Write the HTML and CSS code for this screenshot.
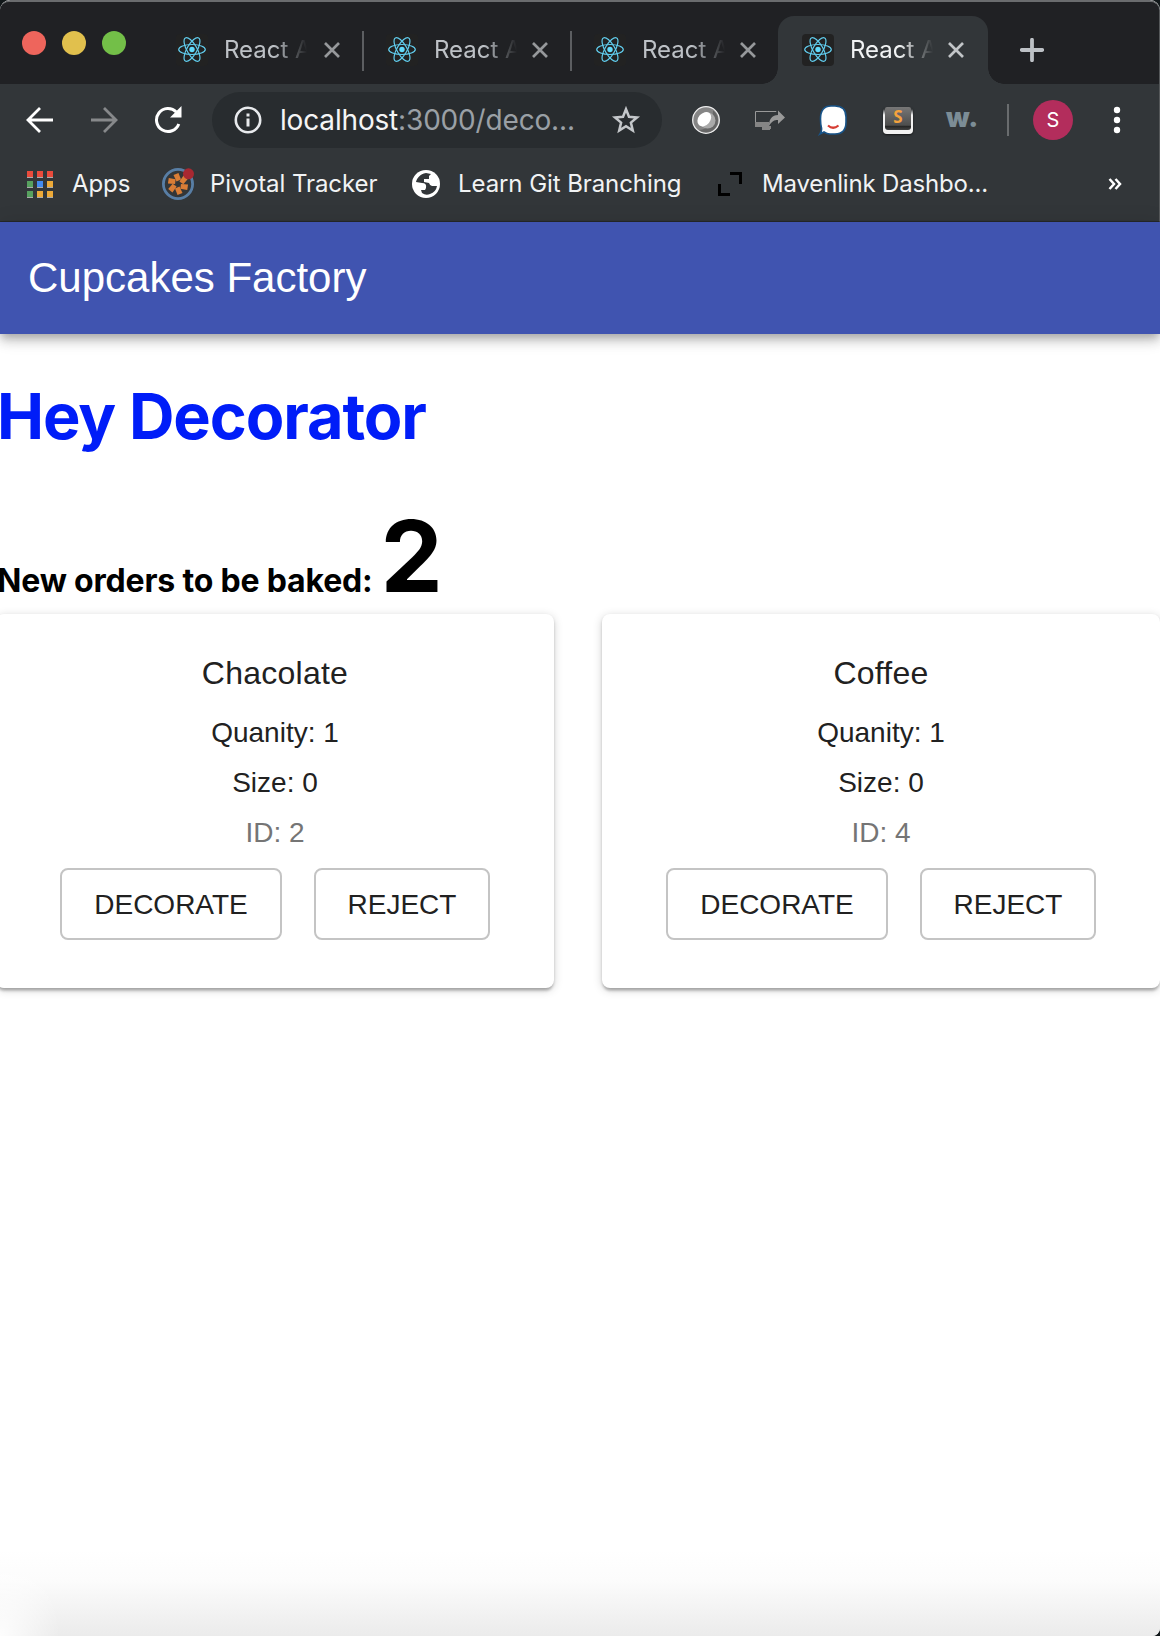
FILE: index.html
```html
<!DOCTYPE html>
<html lang="en">
<head>
<meta charset="utf-8">
<title>Cupcakes Factory</title>
<link rel="stylesheet" href="styles.css">
</head>
<body>
<svg class="defs" width="0" height="0">
  <symbol id="react" viewBox="0 0 32 32">
    <g fill="none" stroke="#61cdee" stroke-width="1.2">
      <ellipse cx="16" cy="15.5" rx="13.3" ry="5"/>
      <ellipse cx="16" cy="15.5" rx="13.3" ry="5" transform="rotate(60 16 15.5)"/>
      <ellipse cx="16" cy="15.5" rx="13.3" ry="5" transform="rotate(120 16 15.5)"/>
    </g>
    <circle cx="16" cy="15.5" r="2.7" fill="#61dafb"/>
  </symbol>
  <symbol id="close" viewBox="0 0 18 18">
    <path d="M2 2 16 16M16 2 2 16" fill="none" stroke="currentColor" stroke-width="2.7"/>
  </symbol>
</svg>
<div class="window">
  <header class="chrome">
    <div class="tabstrip">
      <div class="lights"><i class="red"></i><i class="yellow"></i><i class="green"></i></div>
      <div class="tabs">
        <div class="tab first"><svg class="fav"><use href="#react"/></svg><span class="title">React A</span><svg class="close"><use href="#close"/></svg></div>
        <div class="tab"><svg class="fav"><use href="#react"/></svg><span class="title">React A</span><svg class="close"><use href="#close"/></svg></div>
        <div class="tab last"><svg class="fav"><use href="#react"/></svg><span class="title">React A</span><svg class="close"><use href="#close"/></svg></div>
        <div class="tab active"><svg class="fav"><use href="#react"/></svg><span class="title">React A</span><svg class="close"><use href="#close"/></svg></div>
        <svg class="plus" width="24" height="24"><path d="M12 1.8V22.2M1.8 12H22.2" stroke="#bdc1c6" stroke-width="3.8" stroke-linecap="round"/></svg>
      </div>
    </div>
    <div class="toolbar">
      <svg class="back" width="28" height="28" fill="none" stroke="#fff" stroke-width="2.8"><path d="M27 14H3M14 2 2 14 14 26"/></svg>
      <svg class="forward" width="28" height="28" fill="none" stroke="#87898b" stroke-width="2.8"><path d="M1 14H25M14 2 26 14 14 26"/></svg>
      <svg class="reload" width="28" height="28"><path d="M24.8 18A11.5 11.5 0 1 1 22.3 6" fill="none" stroke="#fff" stroke-width="3"/><path d="M27.5 0V11.5H16Z" fill="#fff"/></svg>
      <div class="omnibox">
        <svg width="28" height="28"><circle cx="14" cy="14" r="12.2" fill="none" stroke="#e8eaed" stroke-width="2.6"/><path d="M12.5 7.5h3v3h-3zM12.5 12.5h3v8h-3z" fill="#e8eaed"/></svg>
        <span class="url"><b>localhost</b>:3000/deco...</span>
        <svg class="star" width="30" height="30" fill="none" stroke="#c4c7ca" stroke-width="2.5"><path d="M15 4.2 18 11.7 26 12.4 19.9 17.6 21.8 25.5 15 21.3 8.2 25.5 10.1 17.6 4 12.4 12 11.7Z"/></svg>
      </div>
      <svg class="ext-ball" width="30" height="30"><circle cx="15" cy="15" r="13.3" fill="#858585" stroke="#eee" stroke-width="1.3"/><path d="M22 5.5A12 12 0 0 1 8 25Q22 24 22 5.5Z" fill="#666"/><circle cx="16.5" cy="15.5" r="8" fill="#aaa"/><ellipse cx="13.3" cy="14.2" rx="6" ry="8" transform="rotate(40 13.3 14.2)" fill="#fff"/></svg>
      <svg class="ext-screen" width="32" height="30"><path d="M22 7V6.5H1.5V18" fill="none" stroke="#999"/><path d="M1 17h14v5H1zM8 22h8v3H8zM14 21h3v3h-3z" fill="#858585"/><path d="M15 21C15 14 18 10 24 10V5.500L31 12.5 24 19V15C20 15 18 16 15 21Z" fill="#999"/></svg>
      <svg class="ext-chat" width="32" height="32"><path d="M3 30Q5 27 4.500 24Q3.500 20 3.500 15Q3.500 2 14 2H18Q29 2 29 13V18Q29 30 18 30H13Q10 30 7 28Z" fill="#fff" stroke="#185489" stroke-width="1.6"/><path d="M11 21.500Q16 26 21.500 21.500" fill="none" stroke="#d63d34" stroke-width="2.2"/></svg>
      <span class="ext-sublime"><span class="key">S</span></span>
      <span class="ext-w">w.</span>
      <i class="bar"></i>
      <span class="avatar">S</span>
      <svg class="menu" width="8" height="28" fill="#fff"><circle cx="4" cy="4" r="3.2"/><circle cx="4" cy="14" r="3.2"/><circle cx="4" cy="24" r="3.2"/></svg>
    </div>
    <nav class="bookmarks">
      <svg class="apps" width="28" height="28"><g fill="#aaa"><path d="M1 1h6v7H1zM11 1h6v7h-6zM21 1h6v7h-6zM1 11h6v7H1zM11 11h6v7h-6zM21 11h6v7h-6zM1 21h6v7H1zM11 21h6v7h-6zM21 21h6v7h-6z"/></g><path d="M1 1h6v6H1zM11 1h6v6h-6zM21 1h6v6h-6z" fill="#e94b3c"/><path d="M1 11h6v6H1zM1 21h6v6H1z" fill="#57a15f"/><path d="M11 11h6v6h-6z" fill="#428af0"/><path d="M21 11h6v6h-6zM11 21h6v6h-6zM21 21h6v6h-6z" fill="#eca938"/></svg>
      <span class="b-apps">Apps</span>
      <svg class="pivotal" width="32" height="32"><circle cx="16" cy="16" r="14.6" fill="#333638" stroke="#587ea5" stroke-width="2.8"/><g fill="#d97d36"><path d="M11.500 7 16.500 5 19 11.500 14.500 13.500Z"/><path d="M11.500 7 16.500 5 19 11.500 14.500 13.500Z" transform="rotate(60 16 16)"/><path d="M11.500 7 16.500 5 19 11.500 14.500 13.500Z" transform="rotate(120 16 16)"/><path d="M11.500 7 16.500 5 19 11.500 14.500 13.500Z" transform="rotate(180 16 16)"/><path d="M11.500 7 16.500 5 19 11.500 14.500 13.500Z" transform="rotate(240 16 16)"/><path d="M11.500 7 16.500 5 19 11.500 14.500 13.500Z" transform="rotate(300 16 16)"/></g><circle cx="26.5" cy="5.8" r="5.5" fill="#a82831"/></svg>
      <span class="b-pivotal">Pivotal Tracker</span>
      <svg class="globe" width="28" height="28"><circle cx="14" cy="14" r="14" fill="#fff"/><path d="M14 3C8 4 5 8 4 12L10 13Q15 13 14 18L13 20H9L10 23Q14 26 18 24Q24 22 25 16H20Q18 16 17 13L12 12V9H17V6L19 4Z" fill="#323639"/></svg>
      <span class="b-git">Learn Git Branching</span>
      <svg class="corners" width="24" height="24" fill="none" stroke="#000" stroke-width="3"><path d="M12 1.5H22.5V12M1.5 12V22.5H12"/></svg>
      <span class="b-maven">Mavenlink Dashbo...</span>
      <svg class="more" width="14" height="12" fill="none" stroke="#fff" stroke-width="2.5"><path d="M1.5 1 6 6 1.5 11M7.5 1 12 6 7.5 11"/></svg>
    </nav>
  </header>
  <div class="appbar">Cupcakes Factory</div>
  <main>
    <h1><span>Hey Decorator</span></h1>
    <h2><span class="label">New orders to be baked:</span><span class="count">2</span></h2>
    <section class="cards">
      <article class="card">
        <h3>Chacolate</h3><p>Quanity: 1</p><p>Size: 0</p><p class="id">ID: 2</p>
        <div class="actions"><button class="decorate">DECORATE</button><button class="reject">REJECT</button></div>
      </article>
      <article class="card">
        <h3>Coffee</h3><p>Quanity: 1</p><p>Size: 0</p><p class="id">ID: 4</p>
        <div class="actions"><button class="decorate">DECORATE</button><button class="reject">REJECT</button></div>
      </article>
    </section>
  </main>
  <footer class="fade"></footer>
</div>
</body>
</html>
```

FILE: styles.css
```css
* { box-sizing: border-box; }
body { margin: 0; background: #111719; font-family: Inter, sans-serif; }
.defs { position: absolute; }
svg { display: block; flex: none; }
span { white-space: nowrap; }
.window { width: 1160px; height: 1636px; overflow: hidden; background: #fff; border-radius: 10px 10px 8px 0; display: flex; flex-direction: column; }
.chrome { height: 222px; background: #323639; border-top: 2px solid #6a6c6e; border-right: 1px solid #55585a; border-bottom: 1px solid #26292b; flex: none; border-radius: 10px 10px 0 0; overflow: hidden; }
.tabstrip { height: 82px; background: #202124; display: flex; }
.lights { display: flex; gap: 16px; padding: 29px 0 0 22px; width: 166px; }
.lights i { width: 24px; height: 24px; border-radius: 50%; }
.red { background: #ee655c; }
.yellow { background: #e1c04d; }
.green { background: #73bf48; }
.tabs { display: flex; padding-top: 14px; }
.tab { width: 208px; height: 68px; padding: 0 0 0 10px; display: flex; align-items: center; color: #bdc1c6; position: relative; }
.tab.first { width: 210px; }
.fav { width: 32px; height: 32px; background: #222; border-radius: 4px; }
.title { font-size: 24px; line-height: 36px; margin-left: 16px; width: 94px; -webkit-mask-image: linear-gradient(90deg, #000 50px, transparent 83px); mask-image: linear-gradient(90deg, #000 50px, transparent 83px); }
.close { width: 18px; height: 18px; margin-left: 3px; color: #96989b; }
.first .close { margin-left: 5px; }
.tab:not(.active):not(.last)::after { content: ""; position: absolute; right: 12px; top: 15px; width: 2px; height: 40px; background: #5c5e61; }
.tab.active { width: 210px; background: #323639; border-radius: 16px 16px 0 0; color: #f1f3f4; margin-left: -14px; padding-left: 24px; }
.tab.active::before, .tab.active::after { content: ""; position: absolute; bottom: 0; width: 16px; height: 16px; }
.tab.active::before { left: -16px; background: radial-gradient(circle at 0 0, transparent 15.5px, #323639 16px); }
.tab.active::after { right: -16px; background: radial-gradient(circle at 100% 0, transparent 15.5px, #323639 16px); }
.active .close { color: #c2c5c8; margin-left: 3px; }
.plus { margin: 22px 0 0 32px; }
.toolbar { height: 72px; display: flex; align-items: center; }
.back { margin-left: 26px; }
.forward { margin-left: 36px; }
.reload { margin-left: 36px; }
.omnibox { margin-left: 30px; width: 450px; height: 56px; border-radius: 28px; background: #282c2f; display: flex; align-items: center; padding-left: 22px; }
.url { font-size: 28px; line-height: 36px; letter-spacing: -0.17px; margin-left: 18px; width: 297px; color: #9aa0a6; }
.url b { font-weight: 400; color: #f4f5f6; }
.star { margin-left: 34px; }
.ext-ball { margin-left: 29px; }
.ext-screen { margin-left: 33px; }
.ext-chat { margin-left: 31px; }
.ext-sublime { margin-left: 34px; width: 30px; height: 27px; border-radius: 4px; background: linear-gradient(transparent 2px, #f2f2f2 8px); padding: 0 2px 3px; box-shadow: 0 1px 2px rgba(0,0,0,.6); }
.key { display: block; height: 23px; border-radius: 2px 2px 3px 3px; background: linear-gradient(#777, #4d4d4d 80%, #222 82%, #444); color: #f5a23d; font: 700 17px/20px "Open Sans", sans-serif; text-align: center; }
.ext-w { margin-left: 33px; width: 33px; font-size: 27px; line-height: 30px; font-weight: 900; letter-spacing: .5px; color: #7c8d96; padding-bottom: 4px; }
.bar { margin-left: 28px; width: 2px; height: 32px; background: #696c6e; }
.avatar { margin-left: 24px; width: 40px; height: 40px; border-radius: 50%; background: #b32d5c; color: #fff; font-size: 20px; line-height: 41px; text-align: center; }
.menu { margin-left: 40px; }
.bookmarks { height: 56px; display: flex; align-items: center; font-size: 24px; line-height: 32px; color: #f1f3f4; letter-spacing: -0.08px; }
.apps { margin-left: 26px; }
.b-apps { margin-left: 18px; width: 90px; }
.b-pivotal { margin-left: 16px; width: 202px; }
.b-git { margin-left: 18px; width: 260px; }
.b-maven { margin-left: 20px; width: 346px; letter-spacing: -0.17px; }
.appbar { height: 112px; flex: none; background: #4054b0; color: #fff; font: 42px/112px "Liberation Sans", Arial, sans-serif; padding-left: 28px; box-shadow: 0 4px 8px -2px rgba(0,0,0,.2), 0 8px 10px rgba(0,0,0,.14), 0 2px 20px rgba(0,0,0,.12); }
main { flex: 1; }
h1 { margin: 42px 0 0 -3px; height: 80px; font-size: 63px; line-height: 80px; letter-spacing: -1.1px; color: #001df8; }
h2 { margin: 45px 0 3px -3px; height: 110px; display: flex; align-items: baseline; font-size: 32px; line-height: 110px; letter-spacing: -0.18px; }
.count { font-size: 99px; margin-left: 8px; }
.cards { display: flex; gap: 48px; margin: 0 0 0 -4px; }
.card { width: 558px; height: 374px; flex: none; border-radius: 8px; background: #fff; box-shadow: 0 2px 10px rgba(0,0,0,.18), 0 2px 3px rgba(0,0,0,.16), 0 5px 3px -2px rgba(0,0,0,.14); padding-top: 34px; text-align: center; color: #212121; font-family: "Liberation Sans", Arial, sans-serif; }
h3 { margin: 0 0 10px; font-size: 32px; font-weight: 400; line-height: 50px; letter-spacing: .24px; }
p { margin: 0; font-size: 28px; line-height: 50px; }
.id { color: #757575; }
.actions { display: flex; justify-content: center; gap: 32px; margin-top: 10px; }
button { height: 72px; border: 2px solid #c4c4c4; border-radius: 8px; background: #fff; font: 28px "Liberation Sans", Arial, sans-serif; color: #212121; padding: 2px 0 0; white-space: nowrap; }
.decorate { width: 222px; }
.reject { width: 176px; }
.fade { height: 86px; flex: none; background: radial-gradient(ellipse 60px 86px at 0 100%, rgba(255,255,255,.9), rgba(255,255,255,0)), linear-gradient(#fff, #fcfcfc 35%, #ebebeb); }
```
